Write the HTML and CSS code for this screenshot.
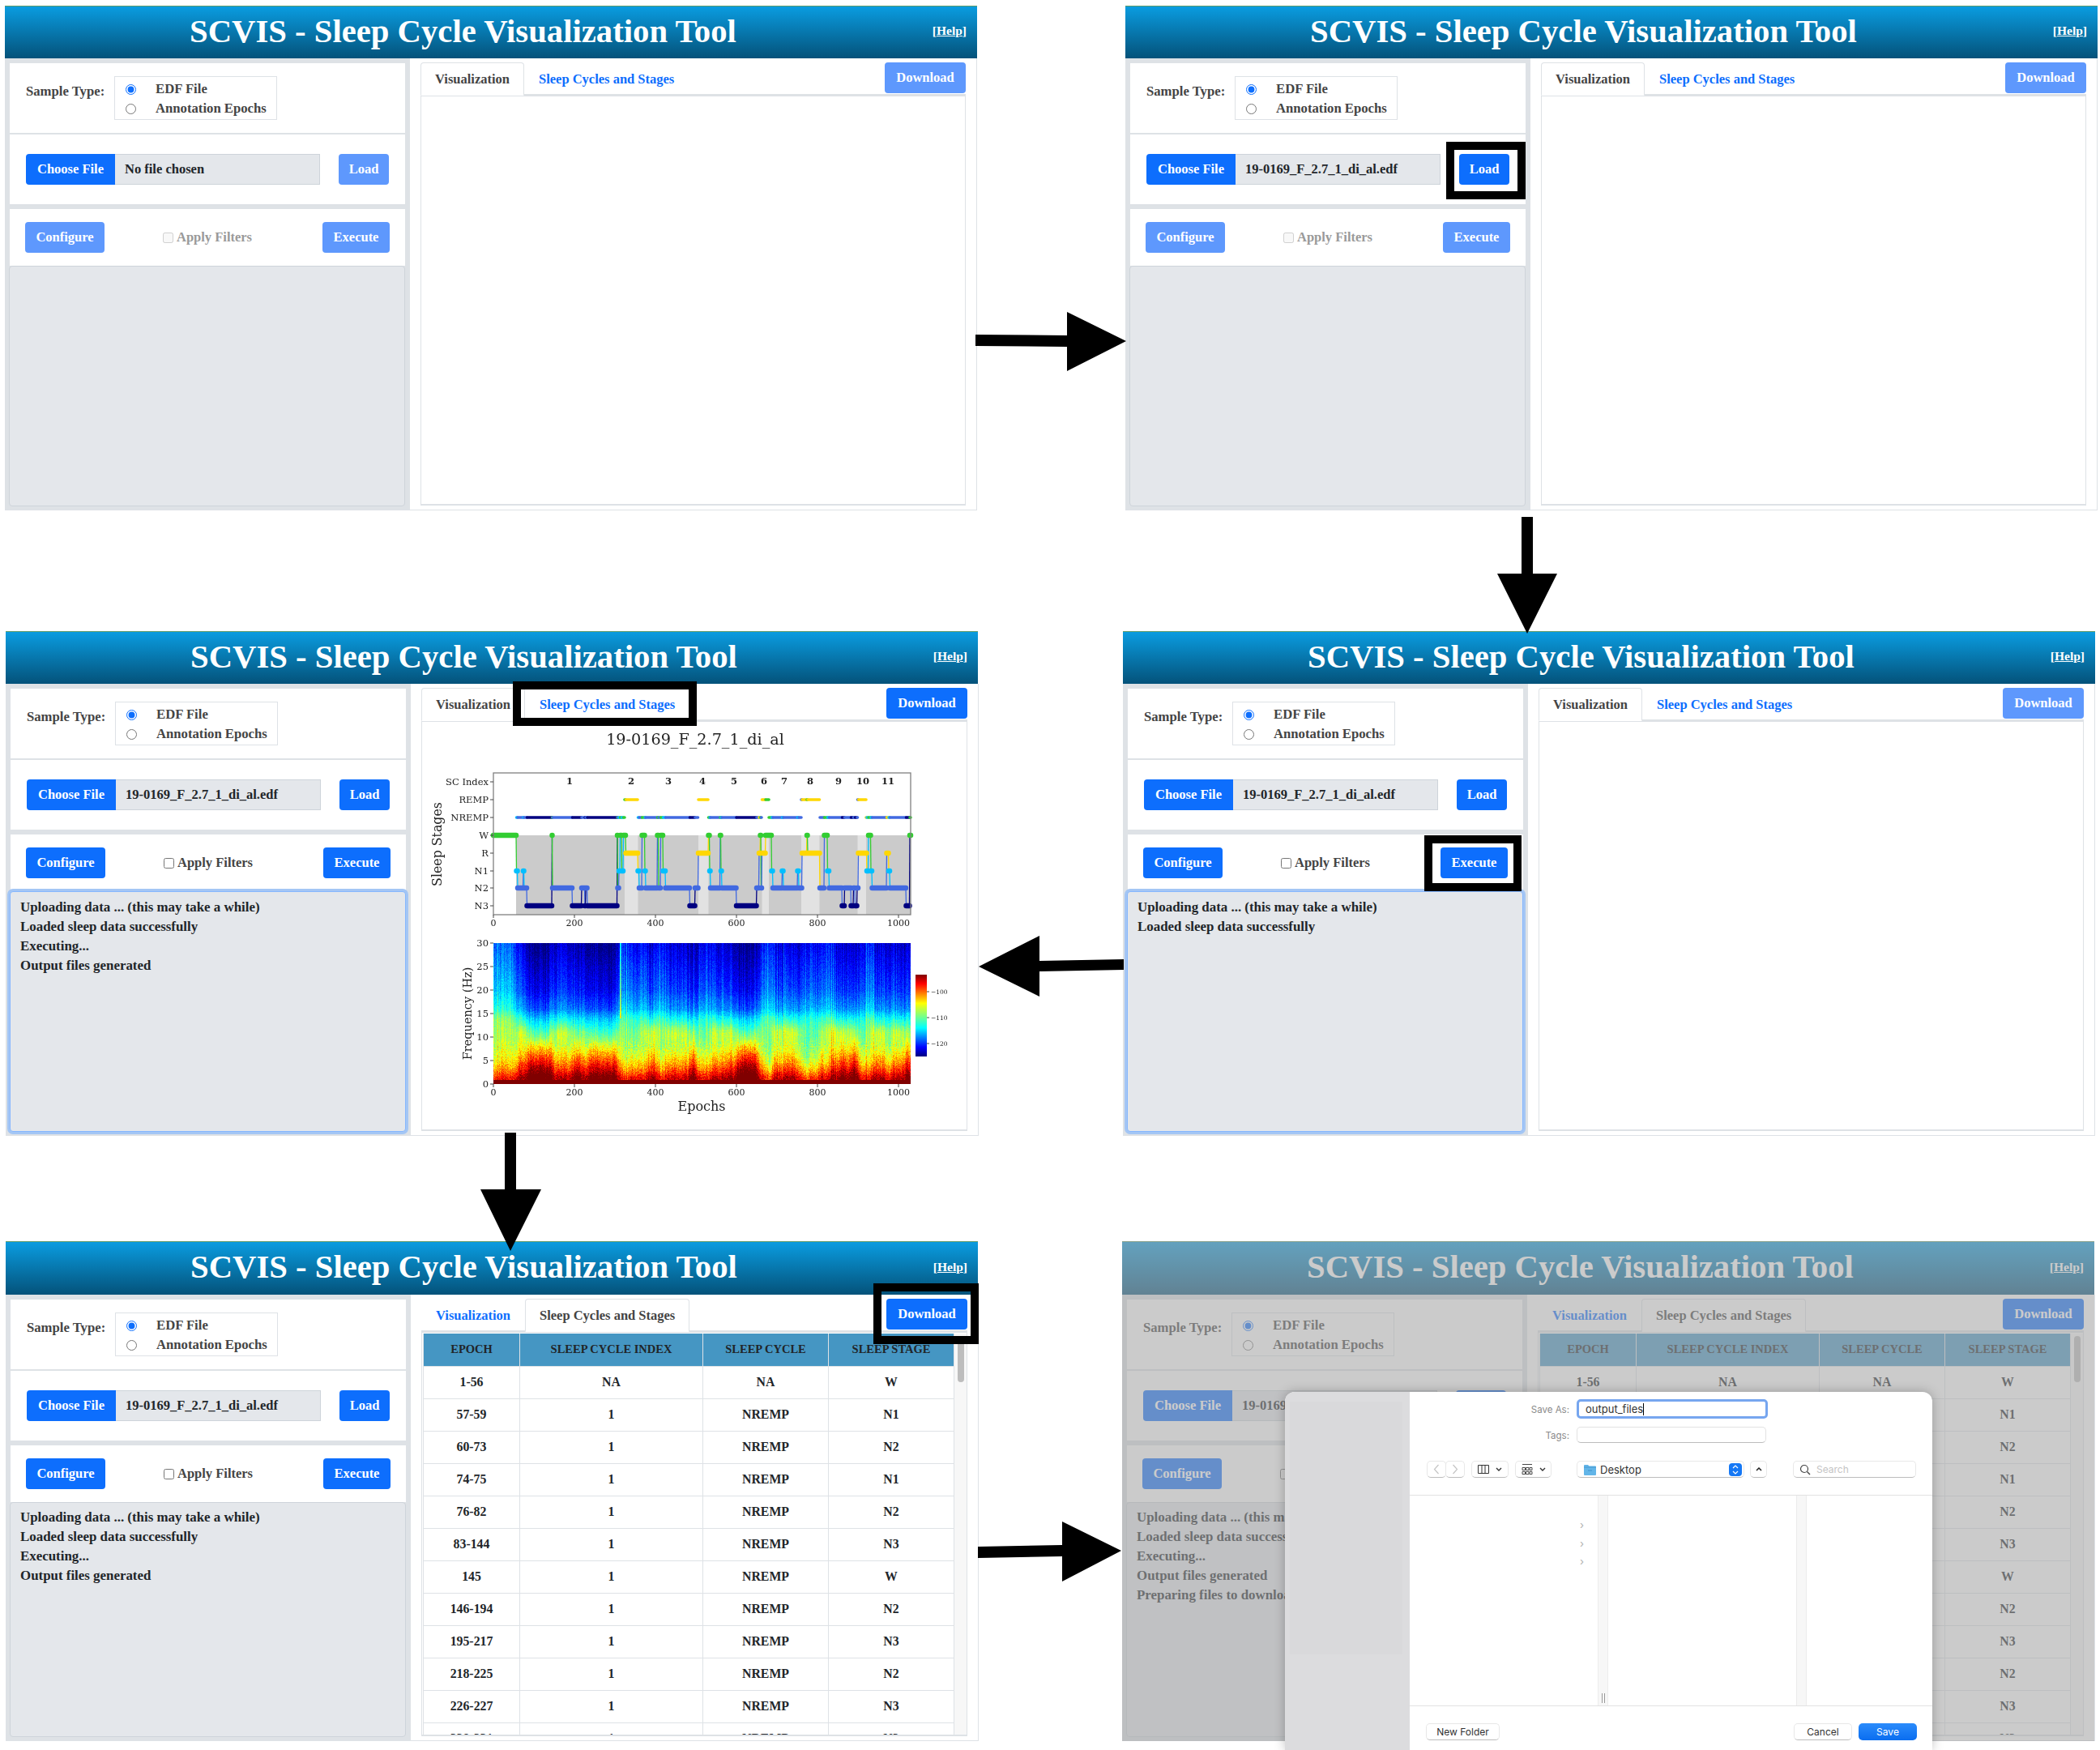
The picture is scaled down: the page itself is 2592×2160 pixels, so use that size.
FILE: index.html
```html
<!DOCTYPE html>
<html>
<head>
    <meta charset="UTF-8">
    <title>SCVIS workflow</title>
    <link rel="stylesheet" href="styles.css">
</head>
<body>
<div id="figure">

    <div class="row row-one">
        <!-- step 1: nothing loaded -->
        <section class="panel">
            <header class="topbar"><h1>SCVIS - Sleep Cycle Visualization Tool</h1><span class="help">[<u>Help</u>]</span></header>
            <div class="work">
                <div class="side">
                    <div class="card card-type">
                        <span class="type-label">Sample Type:</span>
                        <div class="radios">
                            <label><input type="radio" name="s1" checked>EDF File</label>
                            <label><input type="radio" name="s1">Annotation Epochs</label>
                        </div>
                    </div>
                    <div class="card card-file">
                        <span class="file-btn">Choose File</span><span class="file-name">No file chosen</span>
                        <button class="btn off load">Load</button>
                    </div>
                    <div class="card card-run">
                        <button class="btn off conf">Configure</button>
                        <label class="filters off"><input type="checkbox" disabled>Apply Filters</label>
                        <button class="btn off exec">Execute</button>
                    </div>
                    <div class="log"></div>
                </div>
                <div class="main">
                    <div class="tabs">
                        <a class="tab active">Visualization</a><a class="tab">Sleep Cycles and Stages</a>
                        <button class="btn off down">Download</button>
                    </div>
                    <div class="view"></div>
                </div>
            </div>
        </section>

        <!-- step 2: file picked -->
        <section class="panel">
            <header class="topbar"><h1>SCVIS - Sleep Cycle Visualization Tool</h1><span class="help">[<u>Help</u>]</span></header>
            <div class="work">
                <div class="side">
                    <div class="card card-type">
                        <span class="type-label">Sample Type:</span>
                        <div class="radios">
                            <label><input type="radio" name="s2" checked>EDF File</label>
                            <label><input type="radio" name="s2">Annotation Epochs</label>
                        </div>
                    </div>
                    <div class="card card-file">
                        <span class="file-btn">Choose File</span><span class="file-name">19-0169_F_2.7_1_di_al.edf</span>
                        <button class="btn load">Load</button>
                    </div>
                    <div class="card card-run">
                        <button class="btn off conf">Configure</button>
                        <label class="filters off"><input type="checkbox" disabled>Apply Filters</label>
                        <button class="btn off exec">Execute</button>
                    </div>
                    <div class="log"></div>
                </div>
                <div class="main">
                    <div class="tabs">
                        <a class="tab active">Visualization</a><a class="tab">Sleep Cycles and Stages</a>
                        <button class="btn off down">Download</button>
                    </div>
                    <div class="view"></div>
                </div>
            </div>
            <div class="mark mark-load"></div>
        </section>
    </div>

    <div class="row row-two">
        <!-- step 4: chart -->
        <section class="panel">
            <header class="topbar"><h1>SCVIS - Sleep Cycle Visualization Tool</h1><span class="help">[<u>Help</u>]</span></header>
            <div class="work">
                <div class="side">
                    <div class="card card-type">
                        <span class="type-label">Sample Type:</span>
                        <div class="radios">
                            <label><input type="radio" name="s3" checked>EDF File</label>
                            <label><input type="radio" name="s3">Annotation Epochs</label>
                        </div>
                    </div>
                    <div class="card card-file">
                        <span class="file-btn">Choose File</span><span class="file-name">19-0169_F_2.7_1_di_al.edf</span>
                        <button class="btn load">Load</button>
                    </div>
                    <div class="card card-run">
                        <button class="btn conf">Configure</button>
                        <label class="filters"><input type="checkbox">Apply Filters</label>
                        <button class="btn exec">Execute</button>
                    </div>
                    <div class="log focus">
                        <p>Uploading data ... (this may take a while)</p>
                        <p>Loaded sleep data successfully</p>
                        <p>Executing...</p>
                        <p>Output files generated</p>
                    </div>
                </div>
                <div class="main">
                    <div class="tabs">
                        <a class="tab active">Visualization</a><a class="tab">Sleep Cycles and Stages</a>
                        <button class="btn down">Download</button>
                    </div>
                    <div class="view">
                        <svg class="chart" viewBox="520 891 672 504" width="672" height="504">
                            <text class="chart-title" x="857" y="912">19-0169_F_2.7_1_di_al</text>

                            <rect x="608" y="954" width="515" height="175" fill="#fff"/>
                            <g id="bands"></g>
                            <g id="hypno"></g>
                            <rect class="frame" x="608" y="954" width="515" height="175"/>
                            <path class="tick" d="M604 965h4M604 987h4M604 1009h4M604 1031h4M604 1053h4M604 1075h4M604 1096h4M604 1118h4M608 1129v4M708 1129v4M808 1129v4M908 1129v4M1008 1129v4M1108 1129v4"/>
                            <g class="labels-left">
                                <text x="602" y="965">SC Index</text><text x="602" y="987">REMP</text>
                                <text x="602" y="1009">NREMP</text><text x="602" y="1031">W</text>
                                <text x="602" y="1053">R</text><text x="602" y="1075">N1</text>
                                <text x="602" y="1096">N2</text><text x="602" y="1118">N3</text>
                            </g>
                            <g class="labels-cycle">
                                <text x="702" y="964">1</text><text x="778" y="964">2</text><text x="824" y="964">3</text>
                                <text x="866" y="964">4</text><text x="905" y="964">5</text><text x="942" y="964">6</text>
                                <text x="967" y="964">7</text><text x="999" y="964">8</text><text x="1034" y="964">9</text>
                                <text x="1064" y="964">10</text><text x="1095" y="964">11</text>
                            </g>
                            <g class="labels-bottom">
                                <text x="608" y="1139">0</text><text x="708" y="1139">200</text><text x="808" y="1139">400</text>
                                <text x="908" y="1139">600</text><text x="1008" y="1139">800</text><text x="1108" y="1139">1000</text>
                            </g>
                            <text class="axis-name stages" transform="translate(538 1042) rotate(-90)">Sleep Stages</text>

                            <foreignObject x="608" y="1164" width="515" height="174"><canvas id="spectrum" width="515" height="174"></canvas></foreignObject>
                            <path class="tick" d="M604 1164h4M604 1193h4M604 1222h4M604 1251h4M604 1280h4M604 1309h4M604 1338h4M608 1338v4M708 1338v4M808 1338v4M908 1338v4M1008 1338v4M1108 1338v4"/>
                            <g class="labels-left">
                                <text x="602" y="1164">30</text><text x="602" y="1193">25</text><text x="602" y="1222">20</text>
                                <text x="602" y="1251">15</text><text x="602" y="1280">10</text><text x="602" y="1309">5</text><text x="602" y="1338">0</text>
                            </g>
                            <g class="labels-bottom">
                                <text x="608" y="1348">0</text><text x="708" y="1348">200</text><text x="808" y="1348">400</text>
                                <text x="908" y="1348">600</text><text x="1008" y="1348">800</text><text x="1108" y="1348">1000</text>
                            </g>
                            <text class="axis-name" transform="translate(576 1251) rotate(-90)">Frequency (Hz)</text>
                            <text class="axis-name epochs" x="865" y="1365">Epochs</text>

                            <defs>
                                <linearGradient id="jet" x1="0" y1="0" x2="0" y2="1">
                                    <stop offset="0" stop-color="#800000"/><stop offset=".11" stop-color="#ff0000"/>
                                    <stop offset=".35" stop-color="#ffff00"/><stop offset=".5" stop-color="#7fff7f"/>
                                    <stop offset=".65" stop-color="#00ffff"/><stop offset=".89" stop-color="#0000ff"/>
                                    <stop offset="1" stop-color="#000080"/>
                                </linearGradient>
                            </defs>
                            <rect x="1129" y="1203" width="14" height="101" fill="url(#jet)"/>
                            <path class="tick" d="M1143 1224h3M1143 1256h3M1143 1288h3"/>
                            <g class="labels-bar">
                                <text x="1148" y="1224">−100</text><text x="1148" y="1256">−110</text><text x="1148" y="1288">−120</text>
                            </g>
                        </svg>
                    </div>
                </div>
            </div>
            <div class="mark mark-tab"></div>
        </section>

        <!-- step 3: loaded -->
        <section class="panel">
            <header class="topbar"><h1>SCVIS - Sleep Cycle Visualization Tool</h1><span class="help">[<u>Help</u>]</span></header>
            <div class="work">
                <div class="side">
                    <div class="card card-type">
                        <span class="type-label">Sample Type:</span>
                        <div class="radios">
                            <label><input type="radio" name="s4" checked>EDF File</label>
                            <label><input type="radio" name="s4">Annotation Epochs</label>
                        </div>
                    </div>
                    <div class="card card-file">
                        <span class="file-btn">Choose File</span><span class="file-name">19-0169_F_2.7_1_di_al.edf</span>
                        <button class="btn load">Load</button>
                    </div>
                    <div class="card card-run">
                        <button class="btn conf">Configure</button>
                        <label class="filters"><input type="checkbox">Apply Filters</label>
                        <button class="btn exec">Execute</button>
                    </div>
                    <div class="log focus">
                        <p>Uploading data ... (this may take a while)</p>
                        <p>Loaded sleep data successfully</p>
                    </div>
                </div>
                <div class="main">
                    <div class="tabs">
                        <a class="tab active">Visualization</a><a class="tab">Sleep Cycles and Stages</a>
                        <button class="btn off down">Download</button>
                    </div>
                    <div class="view"></div>
                </div>
            </div>
            <div class="mark mark-exec"></div>
        </section>
    </div>

    <div class="row row-three">
        <!-- step 5: table -->
        <section class="panel short">
            <header class="topbar"><h1>SCVIS - Sleep Cycle Visualization Tool</h1><span class="help">[<u>Help</u>]</span></header>
            <div class="work">
                <div class="side">
                    <div class="card card-type">
                        <span class="type-label">Sample Type:</span>
                        <div class="radios">
                            <label><input type="radio" name="s5" checked>EDF File</label>
                            <label><input type="radio" name="s5">Annotation Epochs</label>
                        </div>
                    </div>
                    <div class="card card-file">
                        <span class="file-btn">Choose File</span><span class="file-name">19-0169_F_2.7_1_di_al.edf</span>
                        <button class="btn load">Load</button>
                    </div>
                    <div class="card card-run">
                        <button class="btn conf">Configure</button>
                        <label class="filters"><input type="checkbox">Apply Filters</label>
                        <button class="btn exec">Execute</button>
                    </div>
                    <div class="log">
                        <p>Uploading data ... (this may take a while)</p>
                        <p>Loaded sleep data successfully</p>
                        <p>Executing...</p>
                        <p>Output files generated</p>
                    </div>
                </div>
                <div class="main">
                    <div class="tabs">
                        <a class="tab">Visualization</a><a class="tab active">Sleep Cycles and Stages</a>
                        <button class="btn down">Download</button>
                    </div>
                    <div class="view view-table">
                        <div class="table-wrap">
                            <table>
                                <thead><tr><th>EPOCH</th><th>SLEEP CYCLE INDEX</th><th>SLEEP CYCLE</th><th>SLEEP STAGE</th></tr></thead>
                                <tbody>
                                    <tr><td>1-56</td><td>NA</td><td>NA</td><td>W</td></tr>
                                    <tr><td>57-59</td><td>1</td><td>NREMP</td><td>N1</td></tr>
                                    <tr><td>60-73</td><td>1</td><td>NREMP</td><td>N2</td></tr>
                                    <tr><td>74-75</td><td>1</td><td>NREMP</td><td>N1</td></tr>
                                    <tr><td>76-82</td><td>1</td><td>NREMP</td><td>N2</td></tr>
                                    <tr><td>83-144</td><td>1</td><td>NREMP</td><td>N3</td></tr>
                                    <tr><td>145</td><td>1</td><td>NREMP</td><td>W</td></tr>
                                    <tr><td>146-194</td><td>1</td><td>NREMP</td><td>N2</td></tr>
                                    <tr><td>195-217</td><td>1</td><td>NREMP</td><td>N3</td></tr>
                                    <tr><td>218-225</td><td>1</td><td>NREMP</td><td>N2</td></tr>
                                    <tr><td>226-227</td><td>1</td><td>NREMP</td><td>N3</td></tr>
                                    <tr><td>228-231</td><td>1</td><td>NREMP</td><td>N2</td></tr>
                                </tbody>
                            </table>
                        </div>
                        <div class="scroll"><div class="thumb"></div></div>
                    </div>
                </div>
            </div>
            <div class="mark mark-down"></div>
        </section>

        <!-- step 6: save dialog -->
        <section class="panel short">
            <header class="topbar"><h1>SCVIS - Sleep Cycle Visualization Tool</h1><span class="help">[<u>Help</u>]</span></header>
            <div class="work">
                <div class="side">
                    <div class="card card-type">
                        <span class="type-label">Sample Type:</span>
                        <div class="radios">
                            <label><input type="radio" name="s6" checked>EDF File</label>
                            <label><input type="radio" name="s6">Annotation Epochs</label>
                        </div>
                    </div>
                    <div class="card card-file">
                        <span class="file-btn">Choose File</span><span class="file-name">19-0169_F_2.7_1_di_al.edf</span>
                        <button class="btn load">Load</button>
                    </div>
                    <div class="card card-run">
                        <button class="btn conf">Configure</button>
                        <label class="filters"><input type="checkbox">Apply Filters</label>
                        <button class="btn exec">Execute</button>
                    </div>
                    <div class="log">
                        <p>Uploading data ... (this may take a while)</p>
                        <p>Loaded sleep data successfully</p>
                        <p>Executing...</p>
                        <p>Output files generated</p>
                        <p>Preparing files to download</p>
                    </div>
                </div>
                <div class="main">
                    <div class="tabs">
                        <a class="tab">Visualization</a><a class="tab active">Sleep Cycles and Stages</a>
                        <button class="btn down">Download</button>
                    </div>
                    <div class="view view-table">
                        <div class="table-wrap">
                            <table>
                                <thead><tr><th>EPOCH</th><th>SLEEP CYCLE INDEX</th><th>SLEEP CYCLE</th><th>SLEEP STAGE</th></tr></thead>
                                <tbody>
                                    <tr><td>1-56</td><td>NA</td><td>NA</td><td>W</td></tr>
                                    <tr><td>57-59</td><td>1</td><td>NREMP</td><td>N1</td></tr>
                                    <tr><td>60-73</td><td>1</td><td>NREMP</td><td>N2</td></tr>
                                    <tr><td>74-75</td><td>1</td><td>NREMP</td><td>N1</td></tr>
                                    <tr><td>76-82</td><td>1</td><td>NREMP</td><td>N2</td></tr>
                                    <tr><td>83-144</td><td>1</td><td>NREMP</td><td>N3</td></tr>
                                    <tr><td>145</td><td>1</td><td>NREMP</td><td>W</td></tr>
                                    <tr><td>146-194</td><td>1</td><td>NREMP</td><td>N2</td></tr>
                                    <tr><td>195-217</td><td>1</td><td>NREMP</td><td>N3</td></tr>
                                    <tr><td>218-225</td><td>1</td><td>NREMP</td><td>N2</td></tr>
                                    <tr><td>226-227</td><td>1</td><td>NREMP</td><td>N3</td></tr>
                                    <tr><td>228-231</td><td>1</td><td>NREMP</td><td>N2</td></tr>
                                </tbody>
                            </table>
                        </div>
                        <div class="scroll"><div class="thumb"></div></div>
                    </div>
                </div>
            </div>
            <div class="dim"></div>
            <div class="dialog">
                <div class="dlg-side"><div class="dlg-side-inner"></div></div>
                <div class="dlg-main">
                    <div class="dlg-field">
                        <span class="dlg-label">Save As:</span>
                        <span class="dlg-input focused">output_files<i class="caret"></i></span>
                    </div>
                    <div class="dlg-field dlg-tags">
                        <span class="dlg-label">Tags:</span>
                        <span class="dlg-input"></span>
                    </div>
                    <div class="dlg-tools">
                        <span class="tool nav-l"><svg width="8" height="13" viewBox="0 0 8 13"><path d="M6.5 1 1.5 6.5 6.5 12" fill="none" stroke="#c4c4c4" stroke-width="1.2"/></svg></span>
                        <span class="tool nav-r"><svg width="8" height="13" viewBox="0 0 8 13"><path d="M1.5 1 6.5 6.5 1.5 12" fill="none" stroke="#c4c4c4" stroke-width="1.2"/></svg></span>
                        <span class="tool view-btn">
                            <svg width="14" height="11" viewBox="0 0 14 11"><path d="M.5.5h13v10H.5zM5 .5v10M9 .5v10" fill="none" stroke="#333"/></svg>
                            <svg width="8" height="5" viewBox="0 0 8 5"><path d="M1 1l3 3 3-3" fill="none" stroke="#333" stroke-width="1.4"/></svg>
                        </span>
                        <span class="tool grid-btn">
                            <svg width="14" height="14" viewBox="0 0 14 14"><path d="M1 .5h12M1 4.5h3.5v3H1zM5.5 4.5H9v3H5.5zM10 4.5h3v3h-3zM1 9.5h3.5v3H1zM5.5 9.5H9v3H5.5zM10 9.5h3v3h-3z" fill="none" stroke="#333" stroke-width=".9"/></svg>
                            <svg width="8" height="5" viewBox="0 0 8 5"><path d="M1 1l3 3 3-3" fill="none" stroke="#333" stroke-width="1.4"/></svg>
                        </span>
                        <span class="tool place">
                            <svg width="15" height="14" viewBox="0 0 15 14"><path d="M0 2a1 1 0 0 1 1-1h4l1.500 1.500H14a1 1 0 0 1 1 1V13a1 1 0 0 1-1 1H1a1 1 0 0 1-1-1z" fill="#62b5e8"/><path d="M0 4h15" stroke="#3f93cc" stroke-width=".8"/><path d="M5 8h5" stroke="#3f93cc"/></svg>
                            <span class="place-name">Desktop</span>
                            <span class="stepper"><svg width="8" height="12" viewBox="0 0 8 12"><path d="M1 4l3-3 3 3M1 8l3 3 3-3" fill="none" stroke="#fff" stroke-width="1.2"/></svg></span>
                        </span>
                        <span class="tool up"><svg width="8" height="5" viewBox="0 0 8 5"><path d="M1 4l3-3 3 3" fill="none" stroke="#222" stroke-width="1.5"/></svg></span>
                        <span class="tool search">
                            <svg width="14" height="14" viewBox="0 0 14 14"><circle cx="6" cy="6" r="4.500" fill="none" stroke="#444" stroke-width="1.2"/><path d="M9.500 9.500 13 13" stroke="#444" stroke-width="1.4"/></svg>
                            Search
                        </span>
                    </div>
                    <div class="dlg-cols">
                        <div class="col col-first"><span>›</span><span>›</span><span>›</span></div>
                        <div class="gutter"><i class="grip"></i></div>
                        <div class="col"></div>
                        <div class="gutter"></div>
                        <div class="col col-last"></div>
                    </div>
                    <div class="dlg-foot">
                        <span class="dlg-btn">New Folder</span>
                        <span class="dlg-btn cancel">Cancel</span>
                        <span class="dlg-btn save">Save</span>
                    </div>
                </div>
            </div>
        </section>
    </div>

    <!-- big arrows between the steps -->
    <svg class="arrows" viewBox="0 0 2592 2160" width="2592" height="2160">
        <path d="M1204 413 1317 414V385L1390 421 1317 458V428L1204 427Z"/>
        <path d="M1878 638H1892V708H1922L1885 782 1848 708H1878Z"/>
        <path d="M1387 1184 1283 1186V1155L1208 1193 1283 1230V1199L1387 1197Z"/>
        <path d="M623 1398H637V1468H668L630 1544 593 1468H623Z"/>
        <path d="M1207 1909 1311 1907V1878L1384 1914 1311 1952V1921L1207 1923Z"/>
    </svg>
</div>
<script src="script.js"></script>
</body>
</html>
```

FILE: styles.css
```css
/* reset */
* {
    margin: 0;
    padding: 0;
    box-sizing: border-box;
}
body {
    background: #fff;
    color: #212529;
    font-family: "Liberation Serif", serif;
    font-weight: bold;
    font-size: 16.5px;
}
#figure {
    position: relative;
    width: 2592px;
    height: 2160px;
    overflow: hidden;
}
.row {
    display: flex;
}
.row-one {
    padding-left: 6px;
    padding-top: 7px;
    gap: 183px;
}
.row-two {
    padding-left: 7px;
    margin-top: 149px;
    gap: 179px;
}
.row-three {
    padding-left: 7px;
    margin-top: 130px;
    gap: 178px;
}

/* one screenshot of the tool */
.panel {
    position: relative;
    width: 1200px;
    height: 623px;
    display: flex;
    flex-direction: column;
}
.panel.short {
    height: 617px;
}
.topbar {
    height: 65px;
    flex: none;
    display: flex;
    align-items: center;
    justify-content: space-between;
    padding: 0 13px 4px 228px;
    border-top: 1px solid #5f9a6a;
    background: linear-gradient(#0a9ce0, #04527a);
    color: #fff;
}
.short .topbar {
    height: 66px;
}
.topbar h1 {
    font-size: 40.7px;
    font-weight: bold;
}
.help {
    font-size: 15.5px;
}
.work {
    flex: 1;
    display: flex;
    min-height: 0;
}

/* left column */
.side {
    width: 500px;
    flex: none;
    background: #dee2e6;
    padding: 6px 6px 5px;
    display: flex;
    flex-direction: column;
}
.card {
    background: #fff;
    display: flex;
    flex: none;
}
.card-type {
    height: 86px;
    padding: 16px 0 0 20px;
    margin-bottom: 2px;
    color: #444;
    font-size: 16.7px;
}
.type-label {
    width: 97px;
    margin-top: 9px;
    white-space: nowrap;
}
.radios {
    width: 201px;
    height: 54px;
    margin-left: 12px;
    padding: 3px 0 0 13px;
    border: 1px solid #dee2e6;
}
.radios label {
    display: flex;
    align-items: center;
    height: 24px;
}
.radios input {
    margin-right: 24px;
    accent-color: #0d6efd;
}
.card-file {
    height: 86px;
    padding: 24px 20px 0 20px;
    margin-bottom: 6px;
}
.file-btn {
    width: 110px;
    height: 38px;
    line-height: 38px;
    text-align: center;
    color: #fff;
    background: #0d6efd;
    border-radius: 4px 0 0 4px;
}
.file-name {
    width: 253px;
    height: 38px;
    line-height: 36px;
    padding-left: 12px;
    background: #e4e7eb;
    border: 1px solid #ced4da;
    border-left: 0;
}
.btn {
    height: 38px;
    border: 0;
    border-radius: 4px;
    background: #0d6efd;
    color: #fff;
    font: inherit;
}
.btn.off {
    background: #5e98fd;
}
.load {
    width: 62px;
    margin-left: auto;
}
.card-run {
    height: 70px;
    padding: 16px 19px 0;
}
.conf {
    width: 98px;
}
.exec {
    width: 83px;
    margin-left: auto;
}
.filters {
    display: flex;
    align-items: center;
    height: 38px;
    margin-left: 72px;
    color: #444;
}
.filters.off {
    color: #9a9a9a;
}
.filters input {
    margin-right: 4px;
}
.log {
    flex: 1;
    margin-left: -1px;
    padding: 7px 12px;
    background: #e4e7eb;
    border: 1px solid #ced4da;
    border-radius: 4px;
    font-size: 16.9px;
    line-height: 24px;
}
.short .log {
    padding-top: 6px;
}
.log.focus {
    border-color: #86b7fe;
    box-shadow: 0 0 0 3px #a4c6f4;
}

/* right column */
.main {
    flex: 1;
    display: flex;
    flex-direction: column;
    padding: 5px 13px 5px;
    border-right: 1px solid #dee2e6;
    border-bottom: 1px solid #dee2e6;
}
.tabs {
    flex: none;
    display: flex;
    height: 41px;
    border-bottom: 2px solid #dee2e6;
}
.tab {
    height: 41px;
    padding: 0 17px;
    line-height: 39px;
    color: #0d6efd;
    border: 1px solid transparent;
}
.tab.active {
    color: #444;
    background: #fff;
    border-color: #dee2e6;
    border-bottom-color: #fff;
    border-radius: 4px 4px 0 0;
}
.down {
    width: 100px;
    margin-left: auto;
}
.view {
    flex: 1;
    min-height: 0;
    border: 1px solid #dee2e6;
    border-bottom-width: 2px;
}
.view-table {
    display: flex;
    padding: 1px 0 0 1px;
}
.table-wrap {
    flex: 1;
    overflow: hidden;
}
table {
    width: 656px;
    border-collapse: collapse;
    table-layout: fixed;
    text-align: center;
    font-size: 15.8px;
}
th, td {
    height: 40px;
    border: 1px solid #dee2e6;
    border-top: 0;
}
th {
    background: #4596c3;
    font-size: 14.5px;
    border-color: #dee2e6;
}
th:nth-child(1) { width: 119px; }
th:nth-child(2) { width: 226px; }
th:nth-child(3) { width: 155px; }
.scroll {
    width: 15px;
    flex: none;
    padding: 3px 3px 0 4px;
    background: #f7f7f7;
}
.thumb {
    height: 57px;
    border-radius: 4px;
    background: #bdbdbd;
}

/* chart */
.chart {
    display: block;
    filter: blur(.35px);
    font-family: "DejaVu Serif", serif;
    font-weight: normal;
    fill: #222;
}
.chart text {
    dominant-baseline: central;
}
.chart-title {
    font-size: 19.2px;
    text-anchor: middle;
}
.frame {
    fill: none;
    stroke: #808080;
    stroke-width: 1.3;
}
.tick {
    fill: none;
    stroke: #444;
    stroke-width: 1;
}
.labels-left {
    font-size: 11.5px;
    text-anchor: end;
}
.labels-bottom {
    font-size: 11px;
    text-anchor: middle;
}
.labels-cycle {
    font-size: 11.5px;
    font-weight: bold;
    text-anchor: middle;
}
.labels-bar {
    font-size: 7.500px;
}
.axis-name {
    font-size: 14.5px;
    text-anchor: middle;
}
.stages {
    font-size: 15.8px;
}
.epochs {
    font-size: 16px;
}
#spectrum {
    display: block;
}

/* black boxes that point at the control to press */
.mark {
    position: absolute;
    border: 10px solid #000;
}
.mark-load {
    left: 396px;
    top: 168px;
    width: 98px;
    height: 71px;
}
.mark-tab {
    left: 626px;
    top: 62px;
    width: 227px;
    height: 55px;
}
.mark-exec {
    left: 372px;
    top: 252px;
    width: 120px;
    height: 69px;
}
.mark-down {
    left: 1071px;
    top: 52px;
    width: 130px;
    height: 75px;
}
.arrows {
    position: absolute;
    left: 0;
    top: 0;
    fill: #000;
    pointer-events: none;
}

/* save dialog on the last step */
.dim {
    position: absolute;
    inset: 0;
    background: rgba(165, 165, 165, .58);
}
.dialog {
    position: absolute;
    left: 201px;
    top: 186px;
    width: 799px;
    height: 442px;
    display: flex;
    border-radius: 12px 12px 0 0;
    overflow: hidden;
    background: #fff;
    box-shadow: 0 0 14px rgba(0, 0, 0, .25);
    font-family: Inter, "Liberation Sans", sans-serif;
    font-weight: normal;
    font-size: 13px;
    color: #333;
}
.dlg-side {
    width: 154px;
    flex: none;
    padding: 12px 9px 118px 6px;
    background: #dcdcde;
}
.dlg-side-inner {
    height: 100%;
    background: #d9d9db;
}
.dlg-main {
    flex: 1;
    min-width: 0;
    display: flex;
    flex-direction: column;
}
.dlg-field {
    display: flex;
    align-items: center;
    height: 24px;
    margin-top: 9px;
}
.dlg-tags {
    height: 20px;
    margin-top: 10px;
}
.dlg-label {
    width: 197px;
    margin-right: 9px;
    padding-top: 2px;
    text-align: right;
    font-size: 11.500px;
    color: #8a8a8a;
}
.dlg-input {
    width: 234px;
    height: 100%;
    padding-left: 10px;
    line-height: 20px;
    background: #fff;
    border: 1px solid #e2e2e2;
    border-bottom-color: #bdbdbd;
    border-radius: 5px;
}
.dlg-input.focused {
    width: 236px;
    border: 3px solid #77a6ef;
    padding-left: 8px;
    line-height: 19px;
}
.caret {
    display: inline-block;
    width: 1px;
    height: 15px;
    vertical-align: -3px;
    background: #000;
}
.dlg-tools {
    display: flex;
    align-items: center;
    height: 21px;
    margin-top: 22px;
    padding-left: 21px;
}
.tool {
    height: 21px;
    display: flex;
    align-items: center;
    justify-content: center;
    flex: none;
    border: 1px solid #e8e8e8;
    border-bottom-color: #bdbdbd;
    border-radius: 5px;
}
.nav-l, .nav-r {
    width: 24px;
}
.nav-r {
    margin-left: -1px;
}
.view-btn {
    width: 46px;
    margin-left: 8px;
    gap: 8px;
}
.grid-btn {
    width: 45px;
    margin-left: 8px;
    gap: 8px;
}
.place {
    width: 207px;
    margin-left: 31px;
    padding: 0 2px 0 8px;
    justify-content: flex-start;
}
.place-name {
    margin-left: 5px;
    flex: 1;
}
.stepper {
    width: 16px;
    height: 16px;
    display: flex;
    align-items: center;
    justify-content: center;
    border-radius: 4px;
    background: #1578f5;
}
.up {
    width: 21px;
    margin-left: 7px;
}
.search {
    width: 152px;
    margin-left: 32px;
    padding-left: 7px;
    gap: 7px;
    justify-content: flex-start;
    color: #c4c4c4;
    font-size: 12px;
}
.dlg-cols {
    flex: 1;
    display: flex;
    margin-top: 21px;
    border-top: 1px solid #e2e2e2;
    border-bottom: 1px solid #e2e2e2;
}
.col {
    width: 232px;
    flex: none;
}
.col-last {
    flex: 1;
    min-width: 0;
}
.col-first {
    display: flex;
    flex-direction: column;
    align-items: flex-end;
    padding: 25px 17px 0 0;
    color: #b0b0b0;
    line-height: 22.500px;
}
.gutter {
    width: 13px;
    flex: none;
    display: flex;
    align-items: flex-end;
    justify-content: center;
    padding-bottom: 3px;
    background: #f7f7f7;
    border-left: 1px solid #ececec;
    border-right: 1px solid #ececec;
}
.grip {
    width: 4px;
    height: 12px;
    border-left: 1px solid #999;
    border-right: 1px solid #999;
}
.dlg-foot {
    height: 54px;
    flex: none;
    display: flex;
    padding: 21px 19px 0 20px;
    gap: 8px;
}
.dlg-btn {
    height: 21px;
    width: 91px;
    text-align: center;
    line-height: 19px;
    font-size: 12px;
    background: #fff;
    border: 1px solid #e8e8e8;
    border-bottom-color: #bdbdbd;
    border-radius: 5px;
}
.cancel {
    width: 72px;
    margin-left: auto;
}
.save {
    width: 72px;
    color: #fff;
    border: 0;
    line-height: 21px;
    background: linear-gradient(#2b8cfb, #0a6df0);
}
```

FILE: script.js
```js
// hypnogram and spectrogram of the loaded sample
var Y = {W: 1031, R: 1053, N1: 1075, N2: 1096, N3: 1118};
var COLOR = {W: '#32cd32', R: '#ffd700', N1: '#00bfff', N2: '#4169e1', N3: '#000080'};
var NS = 'http://www.w3.org/2000/svg';

var stages = [
    [0,56,'W'],[57,59,'N1'],[60,73,'N2'],[74,75,'N1'],[76,82,'N2'],[83,144,'N3'],[145,145,'W'],
    [146,194,'N2'],[195,217,'N3'],[218,225,'N2'],[226,227,'N3'],[228,231,'N2'],[232,305,'N3'],
    [306,306,'W'],[307,309,'N2'],[310,312,'N1'],[313,316,'W'],[317,320,'N1'],[321,326,'W'],
    [327,356,'R'],[357,359,'N1'],[360,366,'N2'],[367,373,'W'],[374,375,'N1'],[376,404,'N2'],
    [405,407,'W'],[408,412,'N2'],[413,418,'W'],[419,424,'N1'],[425,484,'N2'],[485,497,'N3'],
    [498,505,'N2'],[506,530,'R'],[531,533,'W'],[534,535,'N1'],[536,559,'N2'],[560,561,'W'],
    [562,563,'N1'],[564,599,'N2'],[600,649,'N3'],[650,655,'N2'],[656,658,'R'],[659,660,'W'],
    [661,662,'N2'],[663,671,'R'],[672,686,'W'],[687,689,'N1'],[690,712,'N2'],[713,715,'N1'],
    [716,750,'N2'],[751,753,'N1'],[754,761,'N2'],[762,773,'R'],[774,775,'W'],[776,805,'R'],
    [806,816,'N2'],[817,824,'W'],[825,828,'N1'],[829,860,'N2'],[861,866,'N3'],[867,882,'N2'],
    [883,888,'N3'],[889,892,'N2'],[893,897,'N3'],[898,900,'N2'],[901,921,'R'],[922,925,'N1'],
    [926,931,'W'],[932,934,'N1'],[935,970,'N2'],[971,975,'R'],[976,978,'N1'],[979,1018,'N2'],
    [1019,1027,'N3'],[1028,1030,'W']
];
var remCycles = [[324,357],[506,531],[663,680],[760,805],[899,920]];

function px(e) {
    return 608 + e * 0.5;
}

function el(parent, name, attrs) {
    var node = document.createElementNS(NS, name);
    for (var k in attrs) node.setAttribute(k, attrs[k]);
    parent.appendChild(node);
    return node;
}

function drawBands() {
    var g = document.getElementById('bands');
    el(g, 'rect', {x: px(56), y: 1031, width: px(1030) - px(56), height: 98, fill: '#cbcbcb'});
    remCycles.forEach(function (c) {
        el(g, 'rect', {x: px(c[0]), y: 1031, width: (c[1] - c[0]) * 0.5, height: 98, fill: '#e2e2e2'});
    });
}

function drawHypno() {
    var g = document.getElementById('hypno');
    // thin joins first, fat runs over them
    for (var i = 0; i < stages.length - 1; i++) {
        var a = stages[i], b = stages[i + 1];
        el(g, 'path', {
            d: 'M' + px(a[1]) + ' ' + Y[a[2]] + 'L' + px(b[0]) + ' ' + Y[b[2]],
            stroke: COLOR[a[2]], 'stroke-width': 1.3, fill: 'none'
        });
    }
    stages.forEach(function (s) {
        el(g, 'path', {
            d: 'M' + px(s[0]) + ' ' + Y[s[2]] + 'L' + px(s[1]) + ' ' + Y[s[2]],
            stroke: COLOR[s[2]], 'stroke-width': 6.5, 'stroke-linecap': 'round', fill: 'none'
        });
    });
    // REMP / NREMP strips
    stages.forEach(function (s) {
        if (s[1] < 57) return;
        var cuts = [s[0]];
        remCycles.forEach(function (c) {
            if (c[0] > s[0] && c[0] < s[1]) cuts.push(c[0]);
            if (c[1] > s[0] && c[1] < s[1]) cuts.push(c[1]);
        });
        cuts.push(s[1]);
        for (var i = 0; i < cuts.length - 1; i++) {
            var mid = (cuts[i] + cuts[i + 1]) / 2;
            var rem = remCycles.some(function (c) { return mid >= c[0] && mid <= c[1]; });
            var y = rem ? 987 : 1009;
            el(g, 'path', {
                d: 'M' + px(cuts[i]) + ' ' + y + 'L' + px(cuts[i + 1]) + ' ' + y,
                stroke: COLOR[s[2]], 'stroke-width': 3.6, 'stroke-linecap': 'round', fill: 'none'
            });
        }
    });
}

// small seeded generator so the noise is the same on each load
var seed = 20190169;
function rnd() {
    seed = (seed * 1664525 + 1013904223) % 4294967296;
    return seed / 4294967296;
}

function clamp(v) {
    return v < 0 ? 0 : v > 1 ? 1 : v;
}

var BASE = [[0,1],[1.5,.97],[3,.86],[5,.74],[7,.64],[10,.5],[14,.38],[16,.27],[20,.18],[30,.08]];
function baseLevel(f) {
    for (var i = 0; i < BASE.length - 1; i++) {
        if (f <= BASE[i + 1][0]) {
            var a = BASE[i], b = BASE[i + 1];
            return a[1] + (b[1] - a[1]) * (f - a[0]) / (b[0] - a[0]);
        }
    }
    return .08;
}

function drawSpectrum() {
    var canvas = document.getElementById('spectrum');
    var ctx = canvas.getContext('2d');
    var w = canvas.width, h = canvas.height;
    var img = ctx.createImageData(w, h);
    var lowBy = {W: -.2, R: -.14, N1: -.1, N2: -.02, N3: .13};
    var highBy = {W: .14, R: .03, N1: .03, N2: 0, N3: -.07};
    var spindleBy = {W: 0, R: 0, N1: .05, N2: .1, N3: 0};
    var low = [], high = [], spindle = [];
    stages.forEach(function (s) {
        for (var e = s[0]; e <= s[1]; e++) {
            low[e] = lowBy[s[2]];
            high[e] = highBy[s[2]];
            spindle[e] = spindleBy[s[2]];
        }
    });
    function smooth(arr, e, r) {
        var sum = 0, n = 0;
        for (var i = e - r; i <= e + r; i++) {
            if (arr[i] !== undefined) { sum += arr[i]; n++; }
        }
        return n ? sum / n : 0;
    }
    var lump = 0;
    for (var x = 0; x < w; x++) {
        var e = x * 2;
        var streak = (rnd() - .5) * .1;
        if (rnd() < .07) streak += rnd() * .1;
        lump = lump * .93 + (rnd() - .5) * .035;
        var spike = Math.abs(e - 313) < 3 ? .2 : 0;
        var l = smooth(low, e, 7), hi = smooth(high, e, 12), sp = smooth(spindle, e, 12);
        var wave = Math.sin(e / 43) * .03;
        for (var y = 0; y < h; y++) {
            var f = 30 * (1 - y / h);
            var t = baseLevel(f)
                + (l + wave + lump) * Math.exp(-Math.pow((f - 4) / 6, 2))
                + hi * Math.min(1, f / 14)
                + sp * Math.exp(-Math.pow((f - 11) / 2, 2))
                + streak * (f > 8 ? .9 : .6)
                + (f > 14 ? spike : 0)
                + (rnd() - .5) * (f < 9 ? .13 : .07);
            t = f < 1 ? 1 : clamp(t);
            var i = (y * w + x) * 4;
            img.data[i] = 255 * clamp(1.5 - Math.abs(4 * t - 3));
            img.data[i + 1] = 255 * clamp(1.5 - Math.abs(4 * t - 2));
            img.data[i + 2] = 255 * clamp(1.5 - Math.abs(4 * t - 1));
            img.data[i + 3] = 255;
        }
    }
    ctx.putImageData(img, 0, 0);
}

drawBands();
drawHypno();
drawSpectrum();
```
